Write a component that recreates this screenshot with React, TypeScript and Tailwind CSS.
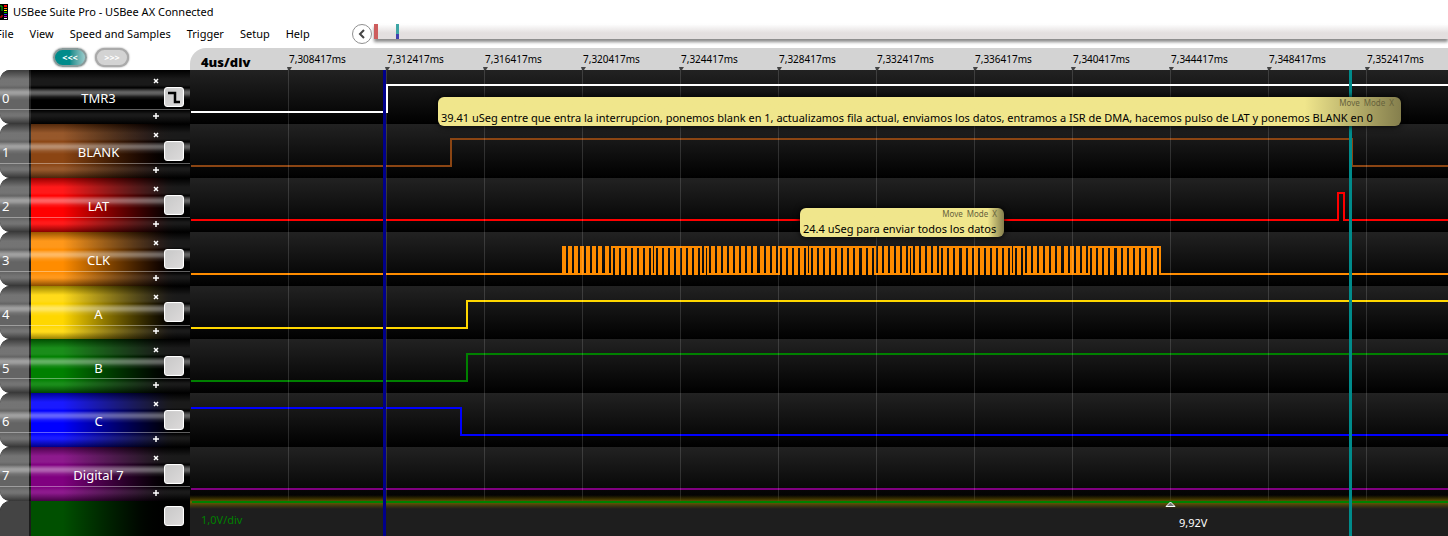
import { ReactNode } from 'react'

const MENU = ['File', 'View', 'Speed and Samples', 'Trigger', 'Setup', 'Help']

const TIMES = [
  '7,308417ms', '7,312417ms', '7,316417ms', '7,320417ms', '7,324417ms', '7,328417ms',
  '7,332417ms', '7,336417ms', '7,340417ms', '7,344417ms', '7,348417ms', '7,352417ms',
]

// plot coordinates start at the top left of the black area, END runs past any window
const END = 4000
const DIV = 98

function pulses(start: number, count: number) {
  const edges: number[] = []
  for (let i = 0; i < count; i++) edges.push(start + i * 6, start + i * 6 + 2)
  return edges
}

const CLK_EDGES = [
  ...pulses(373, 7), 416, 418, 422,
  ...pulses(426, 6), 462, 465,
  ...pulses(469, 7), 511, 515, 518,
  ...pulses(522, 8), ...pulses(571, 3), 589,
  ...pulses(593, 4), 617, 620,
  ...pulses(624, 8), ...pulses(673, 2), 685,
  ...pulses(689, 5), 719, 722,
  ...pulses(726, 4), 750,
  ...pulses(754, 3), ...pulses(773, 8), 821, 824,
  ...pulses(828, 1), 834,
  ...pulses(838, 6), ...pulses(875, 4), 899,
  ...pulses(903, 4), ...pulses(928, 7), 970,
]

type Channel = {
  name: string
  color: string
  fill: string
  top: number
  high?: boolean
  edges: number[]
}

const CHANNELS: Channel[] = [
  { name: 'TMR3', color: '#ffffff', fill: 'from-black', top: 0, edges: [197] },
  { name: 'BLANK', color: '#8b4513', fill: 'from-[#8b4513]', top: 54, edges: [261, 1162] },
  { name: 'LAT', color: '#ff0000', fill: 'from-[#ff0000]', top: 108, edges: [1148, 1154] },
  { name: 'CLK', color: '#ff8c00', fill: 'from-[#ff8c00]', top: 162, edges: CLK_EDGES },
  { name: 'A', color: '#ffd700', fill: 'from-[#ffd700]', top: 216, edges: [277] },
  { name: 'B', color: '#008000', fill: 'from-[#008000]', top: 269, edges: [277] },
  { name: 'C', color: '#0000ff', fill: 'from-[#0000ff]', top: 323, high: true, edges: [271] },
  { name: 'Digital 7', color: '#800080', fill: 'from-[#800080]', top: 377, edges: [] },
]

function wavePath({ top, high, edges }: Channel) {
  let up = !!high
  const y = () => top + (up ? 15 : 42)
  let d = `M1 ${y()}`
  edges.forEach((x) => {
    d += `H${x}`
    up = !up
    d += `V${y()}`
  })
  return d + `H${END}`
}

function TitleBar() {
  return (
    <header className="flex h-6 items-center gap-1 text-[11px]">
      <svg width="9" height="16" viewBox="0 0 9 16" aria-hidden="true">
        <rect width="8" height="16" fill="#000" />
        <path d="M0 2h2v5" fill="none" stroke="#00c000" />
        <path d="M0 13h2v-2" fill="none" stroke="#f00" />
        <path d="M4 2h3" stroke="#f00" strokeWidth="2" />
        <path d="M4 4.500h3" stroke="#ff8c00" />
        <path d="M4 6.500h3" stroke="#ff0" />
        <path d="M4 8.500h3" stroke="#0c0" />
        <path d="M4 10.500h3" stroke="#33f" />
        <path d="M4 12.500h3" stroke="#c0c" />
        <path d="M4 14.500h3" stroke="#fff" />
      </svg>
      <h1>USBee Suite Pro - USBee AX Connected</h1>
    </header>
  )
}

function MenuBar() {
  return (
    <div className="flex h-6">
      <nav className="-ml-1 flex h-5 w-[356px] shrink-0 items-center gap-4 text-[11px] whitespace-nowrap">
        {MENU.map((item) => (
          <button key={item}>{item}</button>
        ))}
      </nav>
      <button aria-label="Scroll left" className="flex size-5 items-center justify-center rounded-full border border-[#909090] bg-white">
        <svg width="8" height="10" viewBox="0 0 8 10" fill="none" stroke="#444" strokeWidth="2">
          <path d="M6 1 2 5l4 4" />
        </svg>
      </button>
      <div className="ml-0.5 flex h-[15px] flex-1 bg-linear-to-b from-white to-[#e3dfdf] to-60% shadow-[0_3px_3px_#8a8a8a]">
        <div className="w-1 bg-[#cd5c5c]" />
        <div className="ml-[18px] w-[3px] bg-[#3da5a5] pt-2.5">
          <div className="h-[5px] bg-[#4040b0]" />
        </div>
      </div>
    </div>
  )
}

function PageButton({ children, label, look }: { children: ReactNode; label: string; look: string }) {
  return (
    <button
      aria-label={label}
      className={`h-[19px] w-[34px] rounded-full border-2 text-[9px] leading-none font-bold text-white shadow-[0_0_2px_#777] ${look}`}
    >
      {children}
    </button>
  )
}

function Ruler() {
  return (
    <div className="flex h-[22px] min-w-0 flex-1 overflow-hidden rounded-tl-2xl bg-[#d3d3d3]">
      <div className="w-[97px] shrink-0 pt-1 pl-[11px] font-['Open_Sans',sans-serif] text-[13px] leading-5 font-extrabold">
        4us/div
      </div>
      {TIMES.map((t) => (
        <div key={t} className="flex w-[98px] shrink-0 flex-col justify-between pt-1 text-[10px] leading-[14px]">
          <span className="pl-0.5">{t}</span>
          <svg width="5" height="3" viewBox="0 0 5 3" aria-hidden="true">
            <path d="M0 0h5L3 3H1z" fill="#444" />
          </svg>
        </div>
      ))}
    </div>
  )
}

function TriggerBox({ name, falling }: { name: string; falling?: boolean }) {
  return (
    <button
      aria-label={`${name} trigger`}
      className="flex size-5 items-center justify-center rounded-[3px] border border-white bg-linear-to-br from-[#c8c8c8] to-[#dcdada] shadow-[inset_0_0_1px_#fff]"
    >
      {falling && (
        <svg width="14" height="14" viewBox="0 0 14 14" fill="none" stroke="#000" strokeWidth="2.500">
          <path d="M1 3h7v9h5" />
        </svg>
      )}
    </button>
  )
}

function ChannelLabel({ channel, index }: { channel: Channel; index: number }) {
  return (
    <div className="relative flex overflow-hidden rounded-l-[10px] bg-black text-white">
      <div className="flex w-[29px] items-center bg-[#646464] pt-1 pl-0.5 text-[13px]">{index}</div>
      <div className="w-0.5 bg-[#1c1c1c]" />
      <div className={`grid flex-1 grid-cols-[1fr_40px] bg-linear-to-r from-20% to-black to-95% ${channel.fill}`}>
        <span className="flex items-center justify-center pt-1 pl-4 text-[13px]">{channel.name}</span>
      </div>
      {/* glossy bands over the whole label */}
      <div className="pointer-events-none absolute inset-0 bg-[linear-gradient(to_bottom,#0006_0,#ffffff1a_9px,#ffffff1a_15px,#fff0_18px,#ffffff26_19px,#ffffff66_22px,#ffffff5c_24px,#ffffff1a_27px,#fff0_30px,#fff0_39px,#ffffff60_39px,#ffffff60_40px,#fff0_40px,#ffffff1a_44px,#ffffff1a_46px,#0007_54px)]" />
      <div className="absolute inset-y-0 right-0 flex w-[42px] items-center justify-end pr-1.5">
        <TriggerBox name={channel.name} falling={index === 0} />
      </div>
      <div className="absolute inset-y-0 right-7 flex w-3 flex-col items-center justify-between pt-1 pb-0.5">
        <button aria-label={`Hide ${channel.name}`}>
          <svg width="6" height="12" viewBox="0 0 6 12" stroke="#fff" strokeWidth="1.500">
            <path d="m1 5 4 4M5 5 1 9" />
          </svg>
        </button>
        <button aria-label={`Expand ${channel.name}`}>
          <svg width="6" height="12" viewBox="0 0 6 12" stroke="#fff" strokeWidth="1.500">
            <path d="M0 6h6M3 3v6" />
          </svg>
        </button>
      </div>
    </div>
  )
}

function Sidebar() {
  return (
    <aside className="flex w-[190px] shrink-0 flex-col">
      <div className="grid h-[431px] shrink-0 grid-rows-8">
        {CHANNELS.map((c, i) => (
          <ChannelLabel key={c.name} channel={c} index={i} />
        ))}
      </div>
      <div className="flex flex-1 overflow-hidden rounded-tl-[10px] bg-black">
        <div className="w-[29px] bg-[#444]" />
        <div className="w-0.5 bg-[#1c1c1c]" />
        <div className="flex flex-1 items-start justify-end bg-linear-to-r from-[#005000] from-20% to-black to-90% pt-[5px] pr-1.5">
          <TriggerBox name="Analog" />
        </div>
      </div>
    </aside>
  )
}

function Waves() {
  return (
    <svg className="absolute inset-0 size-full" role="img" aria-label="Captured signals">
      <defs>
        <linearGradient id="row" x2="0" y2="1">
          <stop offset="0" stopColor="#222" />
          <stop offset="1" stopColor="#000" />
        </linearGradient>
        <linearGradient id="glow" x2="0" y2="1">
          <stop offset="0" stopColor="#605000" stopOpacity="0" />
          <stop offset=".5" stopColor="#706000" />
          <stop offset="1" stopColor="#605000" stopOpacity="0" />
        </linearGradient>
      </defs>
      {CHANNELS.map((c) => (
        <rect key={c.name} y={c.top} width="100%" height="54" fill="url(#row)" />
      ))}
      <rect y="431" width="100%" height="100%" fill="#1e1e1e" />
      <g fill="none" strokeWidth="2" shapeRendering="crispEdges">
        {CHANNELS.map((c) => (
          <path key={c.name} d={wavePath(c)} stroke={c.color} />
        ))}
      </g>
      {Array.from({ length: 40 }, (_, i) => (
        <rect key={i} x={(i + 1) * DIV} width="1" height="431" fill="#fff" fillOpacity=".14" />
      ))}
      <rect y="425" width="100%" height="14" fill="url(#glow)" />
      <rect x="2" y="431" width="100%" height="2" fill="#008000" />
      <path d="m976 436.500 4.500-4.500 4.500 4.500z" fill="#777" stroke="#fff" />
    </svg>
  )
}

function Note({ text, place, shade }: { text: string; place: string; shade: string }) {
  return (
    <div
      className={`absolute flex h-[29px] flex-col rounded-md bg-linear-to-r from-[#f0e68c] to-[#857f4d] px-[3px] text-[11px] leading-[17px] whitespace-nowrap text-black shadow-[0_0_6px_#000] ${place} ${shade}`}
    >
      <div className="flex h-3 justify-end gap-1 pr-1 text-[8px] leading-3 text-[#66623c]">
        <button>Move</button>
        <button>Mode</button>
        <button aria-label="Close note">X</button>
      </div>
      <p>{text}</p>
    </div>
  )
}

function Plot() {
  return (
    <main className="relative min-w-0 flex-1 overflow-hidden bg-black">
      <Waves />
      <div className="absolute inset-y-0 left-[193px] w-[3px] bg-[#00008b]" />
      <div className="absolute inset-y-0 left-[1159px] w-[3px] bg-[#008b8b]" />
      <Note
        text="39.41 uSeg entre que entra la interrupcion, ponemos blank en 1, actualizamos fila actual, enviamos los datos, entramos a ISR de DMA, hacemos pulso de LAT y ponemos BLANK en 0"
        place="top-[27px] left-[248px] w-[963px]"
        shade="from-90%"
      />
      <Note text="24.4 uSeg para enviar todos los datos" place="top-[138px] left-[610px] w-[204px]" shade="from-92%" />
      <div className="absolute top-[440px] left-[11px] text-[11px] leading-5 text-[#008000]">
        <p>1,0V/div</p>
        <p>4us/div</p>
      </div>
      <p className="absolute top-[445px] left-[989px] text-[11px] leading-4 text-white">9,92V</p>
    </main>
  )
}

export default function App() {
  return (
    <div className="flex h-screen flex-col overflow-hidden bg-white font-['Noto_Sans','Open_Sans',sans-serif] text-black">
      <TitleBar />
      <MenuBar />
      <div className="flex shrink-0">
        <div className="flex h-[22px] w-[190px] shrink-0 items-start justify-center gap-2 pr-2">
          <PageButton label="Previous" look="border-[#8a9a9a] bg-linear-to-r from-[#008b8b] from-50% to-[#9cc]">{'<<<'}</PageButton>
          <PageButton label="Next" look="border-[#aaa] bg-[#d3d3d3]">{'>>>'}</PageButton>
        </div>
        <Ruler />
      </div>
      <div className="flex min-h-0 flex-1">
        <Sidebar />
        <Plot />
      </div>
    </div>
  )
}
